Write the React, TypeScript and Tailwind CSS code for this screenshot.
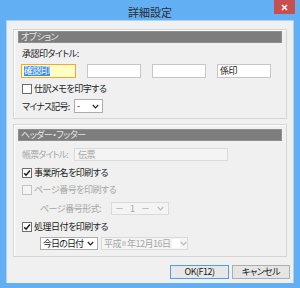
import React from 'react';

const font = "font-['Noto_Sans_CJK_JP','Noto_Sans',sans-serif] [font-feature-settings:'palt'] whitespace-nowrap tracking-[-0.5px]";

const Chevron = ({ disabled }: { disabled?: boolean }) => (
  <svg width="7" height="5" viewBox="0 0 7 5" className="shrink-0">
    <polyline
      points="0.8,1 3.5,3.8 6.2,1"
      fill="none"
      stroke={disabled ? '#b8b8b8' : '#202020'}
      strokeWidth="1.2"
    />
  </svg>
);

const CheckBox = ({ checked, disabled, label }: { checked?: boolean; disabled?: boolean; label: string }) => (
  <div className="flex items-center h-[10px] pl-[4px]">
    <div
      className={`w-[10px] h-[10px] shrink-0 border flex items-center justify-center ${
        disabled ? 'border-[#c4c4c4] bg-[#f4f4f4]' : 'border-[#6e6e6e] bg-white'
      }`}
    >
      {checked && (
        <svg width="8" height="8" viewBox="0 0 8 8">
          <path d="M1.2 4.2 L3.1 6.2 L6.9 1.6" fill="none" stroke="#1a1a1a" strokeWidth="1.5" />
        </svg>
      )}
    </div>
    <span className={`ml-[2px] text-[9px] leading-[10px] ${disabled ? 'text-[#a6a6a6]' : 'text-[#1a1a1a]'}`}>{label}</span>
  </div>
);

const Header = ({ title }: { title: string }) => (
  <div className="h-[12px] bg-[#7d7d7d] border border-[#8f8f8f] flex items-center pl-[2px]">
    <span className="text-[9px] leading-[10px] text-[#e6e6e6]">{title}</span>
  </div>
);

export default function App() {
  return (
    <div className={`w-[300px] h-[288px] bg-[#62aff4] flex flex-col ${font}`}>
      {/* title bar */}
      <div className="relative h-[20px] flex items-center justify-center">
        <span className="text-[11px] leading-[12px] text-[#2d2d2d] mt-[3px] tracking-[0px]">詳細設定</span>
        <div className="absolute right-[5px] top-0 w-[21px] h-[14px] bg-[#c74f50] flex items-center justify-center">
          <svg width="7" height="7" viewBox="0 0 7 7">
            <path d="M1 1 L6 6 M6 1 L1 6" stroke="white" strokeWidth="1.6" />
          </svg>
        </div>
      </div>

      {/* client */}
      <div className="mx-[6px] mb-[5px] flex-1 bg-[#f0f0f0] border-t border-l border-r border-[#a9d2f6] px-[6px] pt-[8px] flex flex-col">
        {/* group 1 */}
        <div className="border border-[#d5d5d5] shadow-[inset_1px_1px_0_#ffffff] pt-[1px] px-[4px] pb-[5px] flex flex-col">
          <Header title="オプション" />
          <div className="mt-[5px] h-[11px] pl-[4px] text-[9px] leading-[11px] text-[#1a1a1a]">承認印タイトル:</div>
          <div className="mt-[5px] flex gap-[11px] pl-[3px]">
            <div className="w-[55px] h-[14px] border border-[#f0a43a] bg-[#ffffc4] flex items-center pl-[2px]">
              <span className="bg-[#3a8fe8] text-white text-[9px] leading-[10px]">確認印</span>
            </div>
            <div className="w-[54px] h-[14px] border border-[#c6c6c6] bg-white" />
            <div className="w-[54px] h-[14px] border border-[#c6c6c6] bg-white" />
            <div className="w-[54px] h-[14px] border border-[#c6c6c6] bg-white flex items-center pl-[2px]">
              <span className="text-[9px] leading-[10px] text-[#1a1a1a]">係印</span>
            </div>
          </div>
          <div className="mt-[6px]">
            <CheckBox label="仕訳メモを印字する" />
          </div>
          <div className="mt-[5px] flex items-center pl-[4px]">
            <span className="w-[52px] shrink-0 text-[9px] leading-[11px] text-[#1a1a1a] tracking-[-0.8px]">マイナス記号:</span>
            <div className="w-[29px] h-[14px] border border-[#adadad] bg-white flex items-center justify-between pl-[2px] pr-[3px]">
              <span className="text-[9px] leading-[10px] text-[#1a1a1a]">-</span>
              <Chevron />
            </div>
          </div>
        </div>

        {/* group 2 */}
        <div className="mt-[5px] border border-[#d5d5d5] shadow-[inset_1px_1px_0_#ffffff] pt-[4px] px-[4px] pb-[6px] flex flex-col">
          <Header title="ヘッダー・フッター" />
          <div className="mt-[7px] flex items-center pl-[4px]">
            <span className="w-[52px] shrink-0 text-[9px] leading-[11px] text-[#a6a6a6] tracking-[-0.8px]">帳票タイトル:</span>
            <div className="w-[154px] h-[13px] border border-[#dadada] bg-[#f4f4f4] flex items-center pl-[3px]">
              <span className="text-[9px] leading-[10px] text-[#a6a6a6]">伝票</span>
            </div>
          </div>
          <div className="mt-[7px]">
            <CheckBox checked label="事業所名を印刷する" />
          </div>
          <div className="mt-[7px]">
            <CheckBox disabled label="ページ番号を印刷する" />
          </div>
          <div className="mt-[7px] flex items-center pl-[22px]">
            <span className="w-[71px] shrink-0 text-[9px] leading-[11px] text-[#a6a6a6]">ページ番号形式:</span>
            <div className="w-[58px] h-[13px] border border-[#dadada] bg-[#f4f4f4] flex items-center justify-between pl-[3px] pr-[4px]">
              <span className="text-[9px] leading-[10px] text-[#a6a6a6] tracking-[2px]">－ 1 －</span>
              <Chevron disabled />
            </div>
          </div>
          <div className="mt-[7px]">
            <CheckBox checked label="処理日付を印刷する" />
          </div>
          <div className="mt-[5px] flex items-center gap-[3px] pl-[22px]">
            <div className="w-[58px] h-[13px] shrink-0 border border-[#adadad] bg-white flex items-center justify-between pl-[2px] pr-[3px]">
              <span className="text-[9px] leading-[10px] text-[#1a1a1a] tracking-[-0.9px]">今日の日付</span>
              <Chevron />
            </div>
            <div className="w-[87px] h-[13px] shrink-0 border border-[#dadada] bg-[#f4f4f4] flex items-center justify-between pl-[2px] pr-[5px]">
              <div className="flex items-center">
                <span className="text-[9px] leading-[10px] text-[#a6a6a6]">平成</span>
                <span className="w-[4px] h-[5px] bg-[#d6d6d6] mx-[1px]" />
                <span className="text-[9px] leading-[10px] text-[#a6a6a6]">年12月16日</span>
                <span className="w-[8px] h-[9px] bg-white ml-[1px]" />
              </div>
              <Chevron disabled />
            </div>
          </div>
        </div>

        {/* buttons */}
        <div className="mt-[8px] flex justify-end gap-[3px] -mr-[3px]">
          <button className="w-[59px] h-[14px] border border-[#4f9de3] bg-[#e8e8e8] flex items-center justify-center text-[9px] leading-[10px] text-[#1a1a1a]">
            OK(F12)
          </button>
          <button className="w-[58px] h-[14px] border border-[#adadad] bg-[#e5e5e5] flex items-center justify-center text-[9px] leading-[10px] text-[#1a1a1a]">
            キャンセル
          </button>
        </div>
      </div>
    </div>
  );
}
